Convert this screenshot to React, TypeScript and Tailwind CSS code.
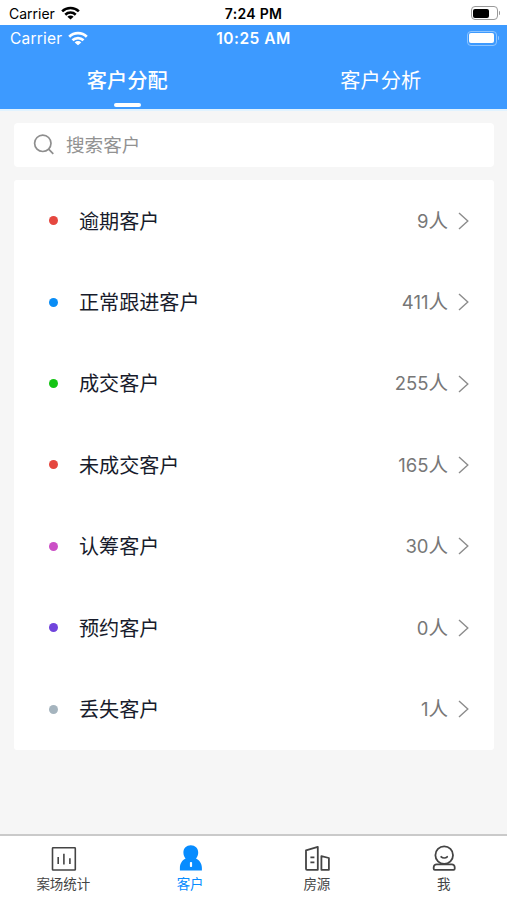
import { useState } from "react";

const groups = [
    { name: "逾期客户", count: 9, dot: "bg-[#e5473f]" },
    { name: "正常跟进客户", count: 411, dot: "bg-[#0a8df5]" },
    { name: "成交客户", count: 255, dot: "bg-[#14c414]" },
    { name: "未成交客户", count: 165, dot: "bg-[#e5473f]" },
    { name: "认筹客户", count: 30, dot: "bg-[#cb50c6]" },
    { name: "预约客户", count: 0, dot: "bg-[#7044dc]" },
    { name: "丢失客户", count: 1, dot: "bg-[#a5b4be]" },
];

function Wifi({ className }: { className: string }) {
    return (
        <svg viewBox="0 0 20 14" className={className} fill="none" stroke="currentColor" strokeWidth="2.7">
            <path d="M1.2 5.3a12.6 12.6 0 0 1 17.6 0" />
            <path d="M4.5 8.8a7.9 7.9 0 0 1 11 0" />
            <path d="M10 13.8 6.7 10.9a4.7 4.7 0 0 1 6.6 0Z" fill="currentColor" stroke="none" />
        </svg>
    );
}

function ChartIcon() {
    return (
        <svg width="30" height="30" viewBox="0 0 30 30" fill="none" stroke="currentColor" strokeWidth="1.6">
            <rect x="4.5" y="3.8" width="22.8" height="22.2" rx="0.6" />
            <path d="M10.2 13v7M15.9 9.8v10.7M21.9 14.3v5.7" />
        </svg>
    );
}

function CustomerIcon() {
    return (
        <svg width="30" height="30" viewBox="0 0 30 30" fill="currentColor">
            <path d="M15.8 1.2c4.3 0 7.4 3.1 7.4 7.2 0 2.4-.8 4.5-2.2 6 3.5 1.7 5.9 5 5.9 9.4v2.6H4.9v-2.6c0-4.4 2.3-7.7 5.7-9.4-1.4-1.5-2.2-3.6-2.2-6 0-4.1 3.1-7.2 7.4-7.2Z" />
            <rect x="14.9" y="18" width="2.2" height="5" rx="0.8" fill="white" />
        </svg>
    );
}

function HouseIcon() {
    return (
        <svg width="30" height="30" viewBox="0 0 30 30" fill="none" stroke="currentColor" strokeWidth="1.8" strokeLinejoin="round">
            <path d="M4 6.3 15.8 2.8v23H5a1 1 0 0 1-1-1Z" />
            <path d="M19.4 12.1 26.9 14v11.8h-7.5Z" />
            <path d="M8.4 13.4h4M8.4 18.3h4" />
        </svg>
    );
}

function MeIcon() {
    return (
        <svg width="30" height="30" viewBox="0 0 30 30" fill="none" stroke="currentColor" strokeWidth="1.8" strokeLinecap="round">
            <circle cx="15.2" cy="11.2" r="8.8" />
            <path d="M12.2 12.8c1.6 1.5 4.4 1.5 6 0" />
            <path d="M7.6 20.3a2.9 2.9 0 0 0-2.9 2.9v1.5c0 .7.4 1.1 1.1 1.1h18.8c.7 0 1.1-.4 1.1-1.1v-1.5a2.9 2.9 0 0 0-2.9-2.9Z" />
        </svg>
    );
}

const navItems = [
    { label: "案场统计", Icon: ChartIcon },
    { label: "客户", Icon: CustomerIcon },
    { label: "房源", Icon: HouseIcon },
    { label: "我", Icon: MeIcon },
];

export default function App() {
    const [tab, setTab] = useState(0);
    const [nav, setNav] = useState(1);
    const [keyword, setKeyword] = useState("");

    return (
        <div className="flex h-[900px] w-[507px] flex-col overflow-hidden bg-[#f6f6f6] font-['Inter','Noto_Sans_CJK_SC',sans-serif]">
            {/* Device status bar */}
            <div className="grid h-[25px] shrink-0 grid-cols-3 items-center bg-white pt-[2px] text-black">
                <div className="flex items-center pl-[9px] text-[14px] leading-none">
                    Carrier
                    <Wifi className="mb-px ml-[6px] h-[14px] w-[19px]" />
                </div>
                <div className="text-center text-[14px] leading-none font-semibold tracking-[0.3px]">7:24 PM</div>
                <div className="flex items-center justify-end pr-[7px]">
                    <div className="mb-px h-[14px] w-[27px] rounded-[4px] border border-[#999] p-[1.5px]">
                        <div className="h-full w-[16px] rounded-[2px] bg-black" />
                    </div>
                    <div className="mb-px ml-px h-[4px] w-[1.5px] rounded-r bg-[#999]" />
                </div>
            </div>

            {/* Header */}
            <div className="flex h-[86px] shrink-0 flex-col border-b-2 border-[#e1f3ff] bg-[#3d9aff] text-white">
                <div className="grid h-[27px] grid-cols-3 items-center">
                    <div className="flex items-center pt-px pl-[10px] text-[15.5px] leading-none tracking-[0.2px]">
                        Carrier
                        <Wifi className="mb-px ml-[6px] h-[15px] w-[20px]" />
                    </div>
                    <div className="pt-px text-center text-[15.5px] leading-none font-semibold tracking-[0.5px]">10:25 AM</div>
                    <div className="flex items-center justify-end pr-[8px]">
                        <div className="mb-px h-[15px] w-[30px] rounded-[4px] border border-[#8ec5ff] p-[1.5px]">
                            <div className="h-full w-full rounded-[2px] bg-white" />
                        </div>
                        <div className="mb-px ml-px h-[4px] w-[1.5px] rounded-r bg-[#8ec5ff]" />
                    </div>
                </div>
                <div className="flex flex-1">
                    {["客户分配", "客户分析"].map((label, i) => (
                        <button
                            key={label}
                            onClick={() => setTab(i)}
                            className="flex flex-1 flex-col items-center justify-between pt-[14px] pb-[2px] pl-px"
                        >
                            <span className={tab === i ? "text-[20.2px] leading-[30px] font-medium" : "text-[20.2px] leading-[30px]"}>
                                {label}
                            </span>
                            <span className={tab === i ? "h-[4px] w-[27px] rounded-full bg-white" : "h-[4px] w-[27px]"} />
                        </button>
                    ))}
                </div>
            </div>

            <div className="flex flex-1 flex-col pt-[12px] pr-[13px] pl-[14px]">
                {/* Search */}
                <div className="flex h-[44px] items-center rounded-[4px] bg-white pl-[19px] text-[#8e8e8e]">
                    <svg width="22" height="22" viewBox="0 0 22 22" fill="none" stroke="currentColor" strokeWidth="1.7">
                        <circle cx="9.8" cy="9.3" r="8.2" />
                        <path d="m15.6 15.1 4.7 4.7" />
                    </svg>
                    <input
                        type="text"
                        value={keyword}
                        onChange={(e) => setKeyword(e.target.value)}
                        placeholder="搜索客户"
                        className="ml-[11px] flex-1 pt-[2px] text-[18.6px] text-[#333] outline-none placeholder:text-[#929292]"
                    />
                </div>

                {/* Customer groups */}
                <div className="mt-[13px] flex h-[570px] flex-col rounded-[3px] bg-white">
                    {groups.map((g) => (
                        <div key={g.name} className="flex flex-1 items-center pr-[25px] pl-[35px]">
                            <div className={`size-[9px] rounded-full ${g.dot}`} />
                            <div className="ml-[21px] flex-1 pt-[2px] text-[20.1px] text-[#171b2b]">{g.name}</div>
                            <div className="pt-px text-[18.5px] text-[#777]">
                                {g.count}
                                <span className="text-[19.5px]">人</span>
                            </div>
                            <svg className="ml-[10px]" width="11" height="18" viewBox="0 0 11 18" fill="none" stroke="#8c8c8c" strokeWidth="1.4">
                                <path d="m1 1 8.8 8L1 17" />
                            </svg>
                        </div>
                    ))}
                </div>
            </div>

            {/* Bottom navigation */}
            <div className="flex h-[66px] shrink-0 border-t-2 border-[#cacaca] bg-white">
                {navItems.map(({ label, Icon }, i) => (
                    <button
                        key={label}
                        onClick={() => setNav(i)}
                        className={`flex flex-1 flex-col items-center pt-[8px] ${nav === i ? "text-[#078cff]" : "text-[#444]"}`}
                    >
                        <Icon />
                        <span className="mt-px text-[13.5px] leading-[18px]">{label}</span>
                    </button>
                ))}
            </div>
        </div>
    );
}
